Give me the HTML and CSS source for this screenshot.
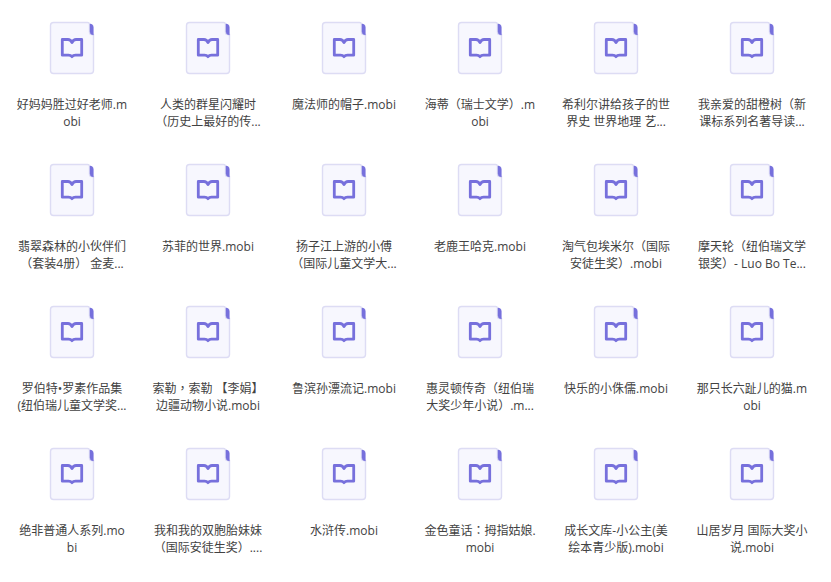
FILE: index.html
```html
<!DOCTYPE html>
<html lang="zh-CN">
<head>
    <meta charset="UTF-8">
    <meta name="viewport" content="width=device-width, initial-scale=1.0">
    <title>mobi</title>
    <link rel="stylesheet" href="styles.css">
</head>
<body>
    <svg class="sprite" aria-hidden="true">
        <symbol id="book" viewBox="0 0 46 54">
            <path d="M4.500 1.500H38.500Q40.500 1.500 40.500 3.500V11Q40.500 13.500 42.500 13.500H44.500V49.500Q44.500 52.500 41.500 52.500H4.500Q1.500 52.500 1.500 49.500V4.500Q1.500 1.500 4.500 1.500Z" fill="#f7f7fe" stroke="#dddcf4" stroke-width="1.400"/>
            <path d="M41 3H41.500Q44.300 3.300 44.300 6.500V14Q41 13.500 41 10.500Z" fill="#7770dc" stroke="#7770dc" stroke-width="0.500"/>
            <path d="M23 21.500Q21.500 18.500 19 18.500H13.300V34.200H19.500Q21.800 34.200 23 35.700Q24.200 34.200 26.500 34.200H32.700V18.500H27Q24.500 18.500 23 21.500" fill="none" stroke="#7770dc" stroke-width="2.800" stroke-linejoin="round" stroke-linecap="round"/>
        </symbol>
    </svg>

    <ul class="files">
        <li class="file"><svg class="icon"><use href="#book"/></svg><p class="name">好妈妈胜过好老师.m<br>obi</p></li>
        <li class="file"><svg class="icon"><use href="#book"/></svg><p class="name">人类的群星闪耀时<br>（历史上最好的传...</p></li>
        <li class="file"><svg class="icon"><use href="#book"/></svg><p class="name">魔法师的帽子.mobi</p></li>
        <li class="file"><svg class="icon"><use href="#book"/></svg><p class="name">海蒂（瑞士文学）.m<br>obi</p></li>
        <li class="file"><svg class="icon"><use href="#book"/></svg><p class="name">希利尔讲给孩子的世<br>界史 世界地理 艺...</p></li>
        <li class="file"><svg class="icon"><use href="#book"/></svg><p class="name">我亲爱的甜橙树（新<br>课标系列名著导读...</p></li>

        <li class="file"><svg class="icon"><use href="#book"/></svg><p class="name">翡翠森林的小伙伴们<br>（套装4册） 金麦...</p></li>
        <li class="file"><svg class="icon"><use href="#book"/></svg><p class="name">苏菲的世界.mobi</p></li>
        <li class="file"><svg class="icon"><use href="#book"/></svg><p class="name">扬子江上游的小傅<br>（国际儿童文学大...</p></li>
        <li class="file"><svg class="icon"><use href="#book"/></svg><p class="name">老鹿王哈克.mobi</p></li>
        <li class="file"><svg class="icon"><use href="#book"/></svg><p class="name">淘气包埃米尔（国际<br>安徒生奖）.mobi</p></li>
        <li class="file"><svg class="icon"><use href="#book"/></svg><p class="name">摩天轮（纽伯瑞文学<br>银奖）- Luo Bo Te...</p></li>

        <li class="file"><svg class="icon"><use href="#book"/></svg><p class="name">罗伯特•罗素作品集<br>(纽伯瑞儿童文学奖...</p></li>
        <li class="file"><svg class="icon"><use href="#book"/></svg><p class="name">索勒<span class="mark" lang="zh-TW">，</span>索勒 【李娟】<br>边疆动物小说.mobi</p></li>
        <li class="file"><svg class="icon"><use href="#book"/></svg><p class="name">鲁滨孙漂流记.mobi</p></li>
        <li class="file"><svg class="icon"><use href="#book"/></svg><p class="name">惠灵顿传奇（纽伯瑞<br>大奖少年小说）.m...</p></li>
        <li class="file"><svg class="icon"><use href="#book"/></svg><p class="name">快乐的小侏儒.mobi</p></li>
        <li class="file"><svg class="icon"><use href="#book"/></svg><p class="name">那只长六趾儿的猫.m<br>obi</p></li>

        <li class="file"><svg class="icon"><use href="#book"/></svg><p class="name">绝非普通人系列.mo<br>bi</p></li>
        <li class="file"><svg class="icon"><use href="#book"/></svg><p class="name">我和我的双胞胎妹妹<br>（国际安徒生奖）....</p></li>
        <li class="file"><svg class="icon"><use href="#book"/></svg><p class="name">水浒传.mobi</p></li>
        <li class="file"><svg class="icon"><use href="#book"/></svg><p class="name">金色童话<span class="mark" lang="zh-TW">：</span>拇指姑娘.<br>mobi</p></li>
        <li class="file"><svg class="icon"><use href="#book"/></svg><p class="name">成长文库-小公主(美<br>绘本青少版).mobi</p></li>
        <li class="file"><svg class="icon"><use href="#book"/></svg><p class="name">山居岁月 国际大奖小<br>说.mobi</p></li>
    </ul>
</body>
</html>
```
FILE: styles.css
```css
body {
    margin: 0;
    background: #fff;
    color: #424242;
    font-family: "Open Sans", "Noto Sans CJK SC", sans-serif;
    font-size: 12px;
    line-height: 17px;
}
.sprite {
    display: none;
}
.files {
    display: grid;
    grid-template-columns: repeat(auto-fill, 136px);
    row-gap: 20px;
    margin: 0;
    padding: 21px 4px 0;
    list-style: none;
}
.file {
    display: flex;
    flex-direction: column;
    align-items: center;
    min-height: 122px;
}
.icon {
    width: 46px;
    height: 54px;
    margin-bottom: 21px;
}
.name {
    margin: 0;
    text-align: center;
    white-space: nowrap;
}
/* centred comma and colon */
.mark {
    font-family: "Noto Sans CJK TC", sans-serif;
    line-height: 1;
}
```
